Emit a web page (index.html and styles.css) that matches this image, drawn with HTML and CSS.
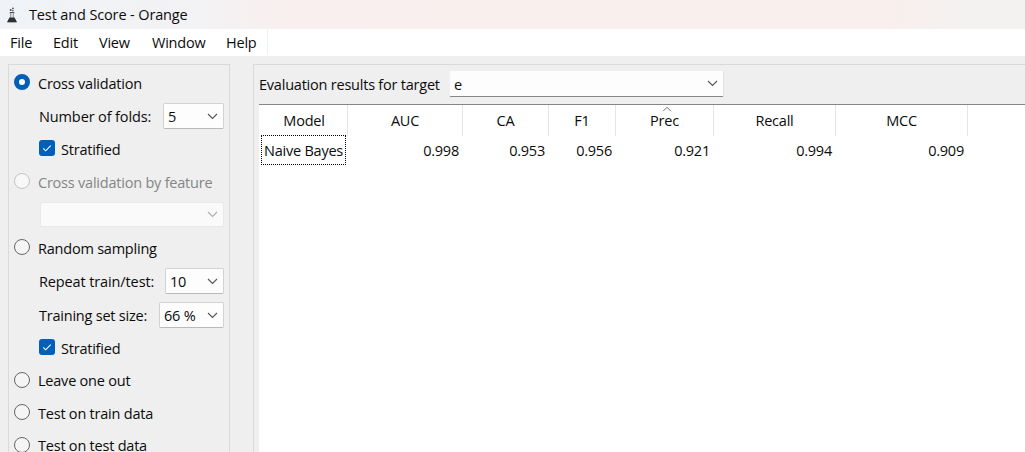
FILE: index.html
```html
<!DOCTYPE html>
<html lang="en">
<head>
<meta charset="utf-8">
<title>Test and Score - Orange</title>
<link rel="stylesheet" href="styles.css">
</head>
<body>
<svg width="0" height="0" class="defs"><defs>
<symbol id="down" viewBox="0 0 11 7"><path d="M1 1l4.5 4.5L10 1" fill="none" stroke="currentColor" stroke-width="1.1"/></symbol>
<symbol id="check" viewBox="0 0 16 16"><path d="M4.2 8.3l2.5 2.5 5-5.2" fill="none" stroke="#fff" stroke-width="1.1"/></symbol>
</defs></svg>
<header class="titlebar">
  <svg class="flask" viewBox="0 0 10 16"><g fill="#4c4f52"><path d="M2.7 5h4.6v1.2H2.7z"/><path d="M3.7 6v4L.8 14.8h8.4L6.3 10V6" fill="#dfe2e5" stroke="#8b8f92" stroke-width=".9"/><path d="M2.5 10.6h5L10 15.3H0z" fill="#2e3032"/><circle cx="3.7" cy="2.9" r="1"/><circle cx="5.9" cy="1.3" r=".9"/><circle cx="5.9" cy="3.6" r=".8"/></g></svg>
  <span class="title">Test and Score - Orange</span>
</header>
<nav class="menubar"><div class="menus"><span class="m-file">File</span><span class="m-edit">Edit</span><span class="m-view">View</span><span class="m-window">Window</span><span class="m-help">Help</span></div></nav>
<main class="content">
  <section class="sampling">
    <label class="row"><i class="radio on"></i><span class="t">Cross validation</span></label>
    <div class="row sub"><span class="t wide">Number of folds:</span><div class="combo c-folds"><span>5</span><svg class="chev"><use href="#down"/></svg></div></div>
    <label class="row sub"><svg class="box"><use href="#check"/></svg><span class="t">Stratified</span></label>
    <label class="row off"><i class="radio"></i><span class="t">Cross validation by feature</span></label>
    <div class="row sub off"><div class="combo c-feature"><svg class="chev"><use href="#down"/></svg></div></div>
    <label class="row"><i class="radio raised"></i><span class="t">Random sampling</span></label>
    <div class="row sub"><span class="t wide">Repeat train/test:</span><div class="combo c-repeat"><span>10</span><svg class="chev"><use href="#down"/></svg></div></div>
    <div class="row sub"><span class="t">Training set size:</span><div class="combo c-size"><span>66 %</span><svg class="chev"><use href="#down"/></svg></div></div>
    <label class="row sub"><svg class="box"><use href="#check"/></svg><span class="t">Stratified</span></label>
    <label class="row"><i class="radio"></i><span class="t">Leave one out</span></label>
    <label class="row"><i class="radio raised"></i><span class="t">Test on train data</span></label>
    <label class="row last"><i class="radio"></i><span class="t">Test on test data</span></label>
  </section>
  <section class="results">
    <div class="target"><span class="t-eval">Evaluation results for target</span><div class="combo c-target"><span>e</span><svg class="chev"><use href="#down"/></svg></div></div>
    <div class="table">
      <div class="line head"><span>Model</span><span>AUC</span><span>CA</span><span>F1</span><span class="sorted"><svg class="sort"><use href="#down"/></svg>Prec</span><span>Recall</span><span>MCC</span></div>
      <div class="line data"><span class="model">Naive Bayes</span><span>0.998</span><span>0.953</span><span>0.956</span><span>0.921</span><span>0.994</span><span>0.909</span></div>
    </div>
  </section>
</main>
</body>
</html>
```
FILE: styles.css
```css
* { box-sizing: border-box; }
body { margin: 0; width: 1025px; height: 452px; overflow: hidden; display: flex; flex-direction: column; background: #efefef; color: #0c0c0c; font: 14.5px/20px "Open Sans", "Noto Sans", sans-serif; letter-spacing: -0.22px; white-space: nowrap; }
.defs { position: absolute; }
.titlebar { flex: 0 0 29px; display: flex; align-items: center; padding: 0 0 0 7px; background: linear-gradient(90deg, #eff3f7 0, #f3f2f4 200px, #f9efee 300px, #f9efed 890px, #f3f2f0 960px, #f3f2f0); }
.flask { width: 10px; height: 16px; }
.title { margin-left: 12px; padding-top: 1px; letter-spacing: -0.13px; }
.menubar { flex: 0 0 27px; background: #fff; }
.menus { display: flex; align-items: center; width: 268px; height: 26px; padding: 2px 0 0 10px; border-right: 1px solid #f0f0f0; }
.m-file { width: 43px; }
.m-edit { width: 46px; }
.m-view { width: 53px; }
.m-window { width: 74px; }
.content { flex: 1; min-height: 0; display: flex; gap: 23px; padding: 8px 0 0 8px; }
.sampling { flex: 0 0 222px; height: 400px; border: 1px solid #dadada; padding-left: 5px; display: grid; grid-template-rows: 35px 32px 33px 32px 35px 32px 34px 34px 31px 33px 33px 32px; }
.row { display: flex; align-items: center; padding-right: 5px; }
.row .t { padding-top: 2px; }
.row .wide { letter-spacing: -0.12px; }
.last { line-height: 14px; }
.sub { padding-left: 25px; }
.radio { width: 16px; height: 16px; border: 1px solid #666; border-radius: 50%; background: #f5f5f5; margin-right: 8px; flex: none; }
.radio.on { border: 5px solid #005fb8; background: #fff; margin-bottom: 1px; }
.radio.raised { margin-bottom: 2px; }
.off { color: #858585; }
.off .t { padding-top: 3px; }
.off .radio { border-color: #c4c4c4; background: #f8f8f8; }
.box { width: 16px; height: 16px; border-radius: 3px; background: #005fb8; margin: 0 6px 2px 0; }
.combo { display: flex; align-items: center; justify-content: space-between; height: 26px; margin-left: auto; padding: 0 5px 0 4px; background: #fdfdfd; border: 1px solid #d2d2d2; border-bottom-color: #bababa; border-radius: 2px; }
.combo span { padding-top: 2px; }
.chev { width: 11px; height: 7px; color: #555; }
.c-folds { width: 61px; }
.c-repeat { width: 59px; }
.c-size { width: 65px; }
.c-feature { width: 184px; height: 25px; justify-content: flex-end; border-color: #e9e9e9; background: #fafafa; }
.off .chev { color: #adadad; }
.results { flex: 1; height: 400px; border: 1px solid #dadada; border-right: 0; padding-left: 5px; }
.target { height: 39px; display: flex; align-items: center; }
.t-eval { width: 190px; padding-top: 1px; }
.c-target { width: 275px; height: 27px; margin: -2px 0 0; border-color: #f0f0f0 #e2e2e2 #868686 #f0f0f0; }
.table { height: 360px; background: #fff; border-top: 1px solid #85858a; }
.line { display: grid; grid-template-columns: 89px 115px 86px 67px 98px 122px 132px; }
.head { height: 30px; line-height: 31px; text-align: center; }
.head span { border-right: 1px solid #e5e5e5; }
.head span:first-child { padding-left: 2px; }
.sorted { position: relative; }
.sort { position: absolute; top: 1px; left: 46px; width: 10px; height: 6px; color: #666; transform: rotate(180deg); }
.data { line-height: 32px; text-align: right; }
.data span { padding-right: 4px; }
.data .model { width: 85px; height: 30px; margin-left: 2px; padding: 0; text-align: center; border: 1px dotted #000; line-height: 30px; }
```
